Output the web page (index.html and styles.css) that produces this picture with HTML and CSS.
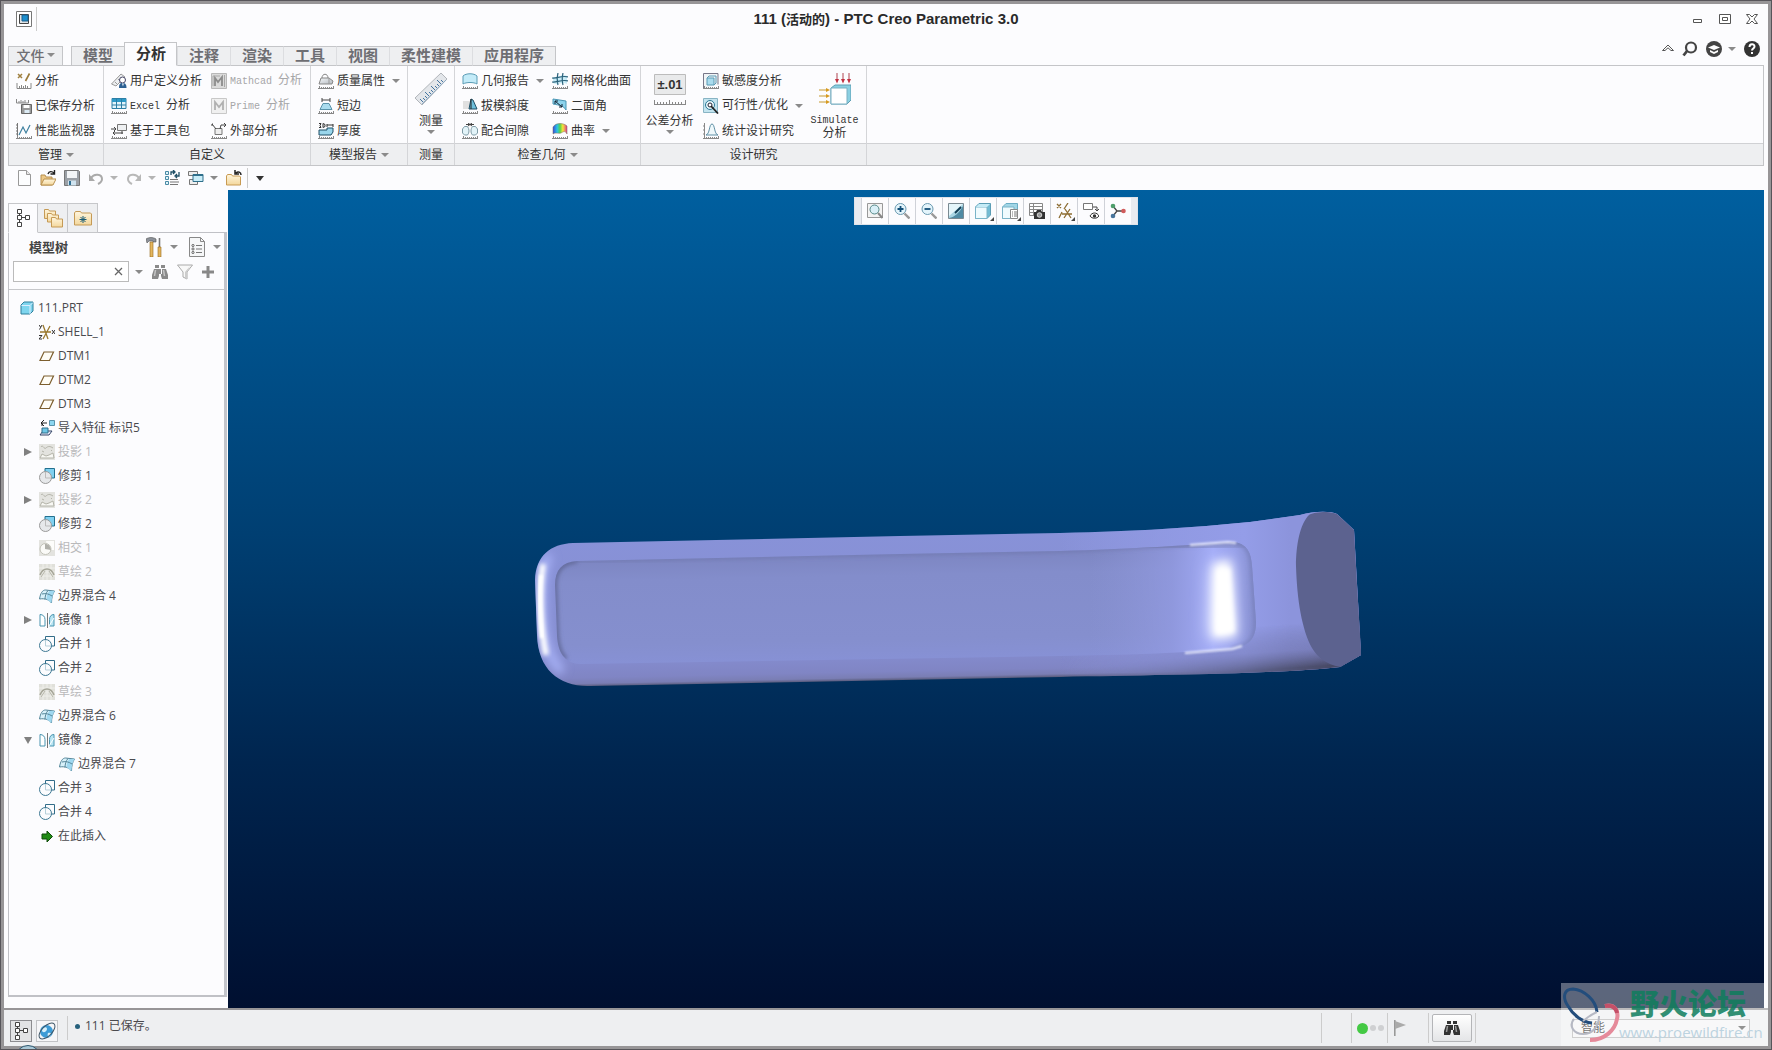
FILE: index.html
```html
<!DOCTYPE html>
<html lang="zh-CN">
<head>
<meta charset="utf-8">
<title>111 (活动的) - PTC Creo Parametric 3.0</title>
<link rel="stylesheet" href="styles.css">
</head>
<body>
<svg class="defs" aria-hidden="true">
  <defs>
    <linearGradient id="g-steel" x1="0" y1="0" x2="1" y2="1"><stop offset="0" stop-color="#f4f6f8"/><stop offset="1" stop-color="#b4bac1"/></linearGradient>
    <linearGradient id="g-fold" x1="0" y1="0" x2="0" y2="1"><stop offset="0" stop-color="#fff6de"/><stop offset="1" stop-color="#f3d79c"/></linearGradient>
    <linearGradient id="g-rain" x1="0" y1="0" x2="1" y2="0"><stop offset="0" stop-color="#3a4bd8"/><stop offset=".3" stop-color="#29c3e6"/><stop offset=".5" stop-color="#58d24a"/><stop offset=".7" stop-color="#f6e43a"/><stop offset="1" stop-color="#e03a8c"/></linearGradient>
    <g id="ticks"><path d="M0 15.500h16" stroke="#888" fill="none"/><path d="M1.500 13v2M3.500 14v1M5.500 14v1M7.500 14v1M9.500 14v1M11.500 14v1M13.500 14v1M15.500 13v2" stroke="#888" fill="none"/></g>
    <g id="folder"><path d="M.5 15V6l1-1.500h4l1 1.500h7l1 1v8z" fill="url(#g-fold)" stroke="#c89a52"/></g>
  </defs>
  <symbol id="i-app" viewBox="0 0 16 16"><path d="M.5.5h15v15H.5z" fill="#fff" stroke="#777"/><path d="M3.500 3.500h9v9h-9z" fill="#dfe3e6" stroke="#444"/><path d="M6 4h6v6H6z" fill="#1d8fce" stroke="#1b5f8c"/></symbol>
  <symbol id="i-analysis" viewBox="0 0 16 16"><path d="M2 1l4 4M6 1L2 5" stroke="#a08040" stroke-width="1.500"/><path d="M13.500.5L9.500 8" stroke="#9a7a3a" stroke-width="1.600"/><path d="M1 10v5.500h14V10" fill="#fff" stroke="#888"/><path d="M3.500 13v2M5.500 12v3M7.500 13v2M9.500 12v3M11.500 13v2" stroke="#888"/></symbol>
  <symbol id="i-saved" viewBox="0 0 16 16"><path d="M.5 1v4h12V2M3 3v2M5 2v3M7 3v2M9 2v3" fill="none" stroke="#888"/><path d="M5.500 6.500h10v9h-10z" fill="#999" stroke="#666"/><path d="M7.500 7h6v3h-6z" fill="#fff"/><path d="M8.500 12h5v3h-5z" fill="#dcebf5"/></symbol>
  <symbol id="i-perf" viewBox="0 0 16 16"><path d="M1.500 0v15M0 2h2M0 5h2M0 8h2M0 11h2" stroke="#777" fill="none"/><path d="M3 12l4-8 3 6 4-8" fill="none" stroke="#3d7f9f" stroke-width="1.200"/><use href="#ticks"/></symbol>
  <symbol id="i-uda" viewBox="0 0 16 16"><path d="M.5 11L10 1l4 3-9 9z" fill="#eceef0" stroke="#999"/><path d="M4 9l2 2M7 6l2 2" stroke="#999"/><circle cx="11.500" cy="7" r="3" fill="#fff" stroke="#446"/><path d="M8 15c0-4 1-5 3.500-5s4 1 4 5z" fill="#2b5f92"/><path d="M11 10.500l1 3 .8-3z" fill="#fff"/></symbol>
  <symbol id="i-excel" viewBox="0 0 16 16"><path d="M1 .5h14v10H1z" fill="#e2f4fb" stroke="#2d7fa6"/><path d="M1 1h14v3H1z" fill="#2d9ac8"/><path d="M5.500 1v10M10.500 1v10M1 7h14" stroke="#2d7fa6"/><use href="#ticks"/></symbol>
  <symbol id="i-toolkit" viewBox="0 0 16 16"><path d="M6.500 1.500h9v6h-9z" fill="#eef0f2" stroke="#777"/><path d="M0 6h5M3 4l2 2-2 2M12 10H2M4 8l-2 2 2 2M11 8v3" fill="none" stroke="#444"/><use href="#ticks"/></symbol>
  <symbol id="i-mathcad" viewBox="0 0 16 16"><path d="M.5.5h15v15H.5z" fill="#dadada" stroke="#b8b8b8"/><path d="M4 13V5l3 4 4-5v9" fill="none" stroke="#8c8c8c" stroke-width="1.800"/><path d="M2 3h7M2 3v10M13.500 2v12" stroke="#a8a8a8"/></symbol>
  <symbol id="i-prime" viewBox="0 0 16 16"><path d="M.5.5h15v15H.5z" fill="#f0f0f0" stroke="#c8c8c8"/><path d="M4 12V4l4 5 4-5v8" fill="none" stroke="#b0b0b0" stroke-width="1.800"/></symbol>
  <symbol id="i-external" viewBox="0 0 16 16"><path d="M4 5.500h7v6H4z" fill="#eee" stroke="#777"/><path d="M1 1l4 5M2 1H1v2M9 6l1-4h5M13 0l2 2-2 2" fill="none" stroke="#444"/><use href="#ticks"/></symbol>
  <symbol id="i-mass" viewBox="0 0 16 16"><path d="M1 11l2-6h8l4 3-1 3z" fill="url(#g-steel)" stroke="#888"/><path d="M4 5c0-5 6-5 6 0" fill="none" stroke="#888"/><path d="M11 5v6" stroke="#999"/><use href="#ticks"/></symbol>
  <symbol id="i-short" viewBox="0 0 16 16"><path d="M4 0v4M12 0v4M4 2h8" stroke="#444" fill="none"/><path d="M5 5.500h6l3 6H2z" fill="#aadcee" stroke="#5a93aa"/><use href="#ticks"/></symbol>
  <symbol id="i-thick" viewBox="0 0 16 16"><path d="M1 .5h2l-1 2 1 2H1M5 .5v4l2-1v-2zM9 2h6M9 1v3M15 1v3" fill="none" stroke="#333"/><path d="M1 12V7h8V5h6v4l-2 3z" fill="#9ad6ec" stroke="#1f4f66"/><use href="#ticks"/></symbol>
  <symbol id="i-ruler" viewBox="0 0 32 32"><path d="M0 25L26 0l6 6L7 32z" fill="#e3e6ea" stroke="#b1b5ba"/><path d="M7 31L31 7" stroke="#8fabc4"/><path d="M8 29l-3-3M10 27l-2-2M12 25l-2-2M14 23l-4-4M16 21l-2-2M18 19l-2-2M20 17l-4-4M22 15l-2-2M24 13l-2-2M26 11l-4-4M28 9l-2-2" stroke="#46759f"/></symbol>
  <symbol id="i-geom" viewBox="0 0 16 16"><path d="M1 11V3c3-3 11-3 14 0v8c-3-2-11-2-14 0z" fill="#c3ebf8" stroke="#5a9bb4"/><use href="#ticks"/></symbol>
  <symbol id="i-draft" viewBox="0 0 16 16"><path d="M1 3h7v8H1z" fill="#e0e0e0"/><path d="M9 1l2 1 4 9H7z" fill="#6fc0dc" stroke="#1f4f66"/><path d="M9 1v10" stroke="#222"/><use href="#ticks"/></symbol>
  <symbol id="i-clear" viewBox="0 0 16 16"><path d="M5.500 3.500h-3L.5 6v4l2 2h3c2-2 2-6 0-8.500zM10.500 3.500h3l2 2.500v4l-2 2h-3c-2-2-2-6 0-8.500z" fill="#e2f3f8" stroke="#7f9ba6"/><path d="M4 1.500h8M6 0l2 1.500L6 3M10 0L8 1.500 10 3" fill="none" stroke="#444"/><use href="#ticks"/></symbol>
  <symbol id="i-mesh" viewBox="0 0 16 16"><path d="M1 10V4c4 2 9-4 14-1v8c-5-3-9 2-14-1z" fill="#c8ebf6"/><path d="M6 0c-1 4-1 8 0 12M11 0c-1 4-1 8 0 12M0 5c4 1 10-3 16-1M0 9c4 1 10-3 16-1" fill="none" stroke="#2a627b" stroke-width="1.200"/><use href="#ticks"/></symbol>
  <symbol id="i-dihedral" viewBox="0 0 16 16"><path d="M1 1l13 2v9c-2-4-7-5-13-6z" fill="#8dd3ec" stroke="#4a96b4"/><path d="M3 3l7 6M3 3v3M3 3h3M10 9V6M10 9H7" stroke="#123" fill="none"/><use href="#ticks"/></symbol>
  <symbol id="i-curv" viewBox="0 0 16 16"><path d="M1 11V4c3-5 11-4 14-1v8c-2-4-4-2-6-1S3 9 1 11z" fill="url(#g-rain)" stroke="#765" stroke-width=".5"/><use href="#ticks"/></symbol>
  <symbol id="i-sens" viewBox="0 0 16 16"><path d="M.5 16V.5H15v11" fill="#f0f4f6" stroke="#778"/><path d="M4 5h7v7H4z" fill="#aadcee" stroke="#5a9bb5"/><path d="M4 5l2-2h7v7l-2 2" fill="none" stroke="#5a9bb5"/><use href="#ticks"/></symbol>
  <symbol id="i-opt" viewBox="0 0 16 16"><path d="M.5.5h14v14H.5z" fill="#c3e4ef" stroke="#88b4c4"/><circle cx="7" cy="7" r="4.500" fill="#e9f7fb" stroke="#2a7896"/><circle cx="7" cy="7" r="2" fill="#fff" stroke="#223"/><path d="M8 8l7 7.500" stroke="#222" stroke-width="1.800"/></symbol>
  <symbol id="i-stat" viewBox="0 0 16 16"><path d="M1.500 0v15M0 3h2M0 7h2M0 11h2" stroke="#888"/><path d="M3 12C7 11 6 1 9 1s2 10 6 11z" fill="#eef8fb" stroke="#5f8fa5"/><use href="#ticks"/></symbol>
  <symbol id="i-sim" viewBox="0 0 32 32"><path d="M12 15l4-3h16v15l-4 4H12z" fill="#8ad0e2" stroke="#5c9db2"/><path d="M12 15h16v16H12z" fill="#fff" stroke="#7ab0c2"/><path d="M18 0v8M24 0v8M30 0v8" stroke="#b04450"/><path d="M16 6h4l-2 4.500zM22 6h4l-2 4.500zM28 6h4l-2 4.500z" fill="#c03040"/><path d="M0 17h9M0 23h9M0 29h9" stroke="#c79a30"/><path d="M7 15l4 2-4 2zM7 21l4 2-4 2zM7 27l4 2-4 2z" fill="#d79a20"/></symbol>
  <symbol id="i-new" viewBox="0 0 16 16"><path d="M2.500.5h8l4 4v11h-12z" fill="#fcfdfe" stroke="#999"/><path d="M10.500.5v4h4" fill="#e8e8e8" stroke="#999"/></symbol>
  <symbol id="i-open" viewBox="0 0 16 16"><path d="M1 15V5h4l1 2h6v8z" fill="#edc988" stroke="#b8904f"/><path d="M1 15l3-6h12l-3 6z" fill="url(#g-fold)" stroke="#b8904f"/><path d="M8 4c1-3 4-3 6-1M14.500 0v4h-4" fill="none" stroke="#222" stroke-width="1.400"/></symbol>
  <symbol id="i-save" viewBox="0 0 16 16"><path d="M.5.5h14l1 1v14H.5z" fill="#9ba0a6" stroke="#777"/><path d="M3 1h10v7H3z" fill="#f3f5f7"/><path d="M4 10.500h8v5H4z" fill="#cfe3ef"/><path d="M5 11h2v4H5z" fill="#2f6f93"/></symbol>
  <symbol id="i-undo" viewBox="0 0 16 16"><path d="M3 8c3-5 11-4 11 1 0 3-2 4-4 5" fill="none" stroke="#aaa" stroke-width="2"/><path d="M1 4v7h6z" fill="#aaa"/></symbol>
  <symbol id="i-redo" viewBox="0 0 16 16"><path d="M13 8C10 3 2 4 2 9c0 3 2 4 4 5" fill="none" stroke="#b8b8b8" stroke-width="2"/><path d="M15 4v7H9z" fill="#b8b8b8"/></symbol>
  <symbol id="i-regen" viewBox="0 0 16 16"><path d="M1.500 1.500h3v3h-3zM1.500 6.500h3v3h-3zM1.500 11.500h3v3h-3z" fill="#dff3fa" stroke="#4a8ba5"/><path d="M7 5V2h3M9 0l2 2-2 2M15 2v4h-3M13 4l-2 2 2 2" stroke="#1f4f66" stroke-width="1.300" fill="none"/><path d="M6 9.500h8M6 12h9M6 14.500h8" stroke="#777"/></symbol>
  <symbol id="i-windows" viewBox="0 0 16 16"><path d="M.5 1.500h9v4h-9zM1.500 9.500h8v5h-8z" fill="#eee" stroke="#777"/><path d="M5 4.500h10v7H5z" fill="#c9edf8" stroke="#2f6f8b"/><path d="M5 5h10" stroke="#2f6f8b" stroke-width="2"/></symbol>
  <symbol id="i-close-folder" viewBox="0 0 16 16"><use href="#folder"/><path d="M15 5c0-3-3-4-5-2M9 0v4h4" fill="none" stroke="#222" stroke-width="1.500"/></symbol>
  <symbol id="i-tree" viewBox="0 0 16 18"><path d="M2.500.5h4v4h-4zM2.500 6.500h4v4h-4zM2.500 13.500h4v4h-4zM10.500 6.500h4v4h-4z" fill="#fff" stroke="#444"/><path d="M4.500 4.500v2M4.500 10.500v3M6.500 8.500h4" stroke="#444"/></symbol>
  <symbol id="i-folders" viewBox="0 0 20 20"><path d="M1.500 10.500v-9h4L6.500 3h6v7.500z" fill="url(#g-fold)" stroke="#c59a55"/><path d="M4.500 14V5.500h4l1 1.500h6v7z" fill="url(#g-fold)" stroke="#c59a55"/><path d="M8.500 19V9.500h4l1 1.500h6v8z" fill="url(#g-fold)" stroke="#c59a55"/></symbol>
  <symbol id="i-favs" viewBox="0 0 18 16"><path d="M.5 15V3l1-1.500h5L7.500 3h9l1 1v11z" fill="url(#g-fold)" stroke="#c59a55"/><path d="M9 6v7M5.500 9.500h7M6.500 7l5 5M11.500 7l-5 5" stroke="#1b5c74"/></symbol>
  <symbol id="i-tools" viewBox="0 0 16 20"><path d="M0 2c3-2 7-2 10 0v3H7V4H3l-2 2z" fill="#8c9199" stroke="#555" stroke-width=".6"/><path d="M4 5h3v15H4z" fill="#e4b65e" stroke="#96681c" stroke-width=".6"/><path d="M13.500 1v10" stroke="#777" stroke-width="1.600"/><path d="M12 10h3v10h-3z" fill="#e4b65e" stroke="#96681c" stroke-width=".6"/></symbol>
  <symbol id="i-sheet" viewBox="0 0 16 20"><path d="M.5.5h11l4 4v15H.5z" fill="#f6f7f8" stroke="#888"/><path d="M11.500.5v4h4" fill="none" stroke="#888"/><path d="M7 8.500h6M7 12h6M7 15.500h6" stroke="#777"/><circle cx="4" cy="8.500" r="1.100" fill="none" stroke="#666"/><circle cx="4" cy="12" r="1.100" fill="none" stroke="#666"/><circle cx="4" cy="15.500" r="1.100" fill="none" stroke="#666"/></symbol>
  <symbol id="i-bino" viewBox="0 0 16 16"><path d="M3 1h4v3H3zM9 1h4v3H9zM6 5h4v5H6zM2 5h5v7l-1 3H0v-4zM14 5H9v7l1 3h6v-4z" fill="currentColor"/><path d="M3.500 6l-1 6M11.500 6l1 6" stroke="#fff" stroke-opacity=".5" stroke-width="1.500"/></symbol>
  <symbol id="i-funnel" viewBox="0 0 16 16"><path d="M.5 1h15L10 8v7l-4-2V8z" fill="#f8f8f8" stroke="#aaa"/><path d="M10 8v7l-2-1V8l5-6" fill="#ccc"/></symbol>
  <symbol id="i-part" viewBox="0 0 16 16"><path d="M2 5l3-3h9v9l-3 3H2z" fill="#7ed5ee" stroke="#2f7f9b"/><path d="M2.500 5.500H11V14M11 5.500l3-3" fill="none" stroke="#def"/></symbol>
  <symbol id="i-csys" viewBox="0 0 16 16"><path d="M1 8h11M4 1l5 14M11 2L4 15" stroke="#9b7a30" stroke-width="1.300"/><path d="M0 1l1.500 2M3 1L.5 5.500M0 11.500h3L0 15h3M13 6l3 4M16 6l-3 4" fill="none" stroke="#333"/></symbol>
  <symbol id="i-plane" viewBox="0 0 16 16"><path d="M5 4h9.500l-4 8.500H1z" fill="#fffdf6" stroke="#7c5e2e" stroke-width="1.200"/></symbol>
  <symbol id="i-import" viewBox="0 0 16 16"><path d="M10.500.5h5v5h-5z" fill="#8cd6f0" stroke="#5a93aa"/><path d="M3 6V3h5M5 0L2 3l3 3" stroke="#222" fill="none"/><path d="M4 11l-3 4h9l3-4z" fill="#eef" stroke="#346"/><path d="M3 8h6v5H3z" fill="#6fc7e6" stroke="#2f6f8b"/></symbol>
  <symbol id="i-project" viewBox="0 0 16 16"><path d="M0 0h16v16H0z" fill="#e3e3df"/><path d="M2 3c2-3 3 3 5 1s4-2 7 0M3 7l2 1M12 6l1 1" fill="none" stroke="#b4b4aa"/><path d="M1 14l2-4 4 2 3-1 4-2 1 5z" fill="#f8f8f4" stroke="#b4b4aa"/></symbol>
  <symbol id="i-trim" viewBox="0 0 16 16"><path d="M6 .5h9.500V10H6z" fill="#7fd0f0" stroke="#23708f"/><circle cx="6.500" cy="9.500" r="6" fill="#e6e8ea" stroke="#999"/><path d="M6.500 4v6H12" fill="none" stroke="#bbb"/></symbol>
  <symbol id="i-intersect" viewBox="0 0 16 16"><path d="M0 0h16v16H0z" fill="#e3e3df"/><path d="M7 1h8v9H9z" fill="#fdfdfb"/><circle cx="6.500" cy="9" r="5.500" fill="#fafaf7" stroke="#c2c2b8"/><path d="M6 4c4 0 5 2 6 6L6 9z" fill="#b0b0aa"/></symbol>
  <symbol id="i-sketch" viewBox="0 0 16 16"><path d="M0 0h16v16H0z" fill="#e0e0da"/><path d="M0 4h16M0 8h16M0 12h16M4 0v16M8 0v16M12 0v16" stroke="#efefea"/><path d="M1 11C4 3 12 3 15 11" fill="none" stroke="#a5a598" stroke-width="1.300"/><path d="M2 13l4-6M14 13l-4-6" stroke="#b5b5a8"/></symbol>
  <symbol id="i-blend" viewBox="0 0 16 16"><path d="M.5 11c1-6 3-9 6-9l9 1c-2 3-3 7-3 12-2-3-6-5-12-4z" fill="#d8f1fa" stroke="#55869a"/><path d="M15.500 3c-2 3-3 7-3 12l-5-4c0-3 1-6 3-8z" fill="#9fd8f0"/><path d="M9 2.500c-2 2-3 6-3 9M3 6c4-1 7 0 10 2" fill="none" stroke="#55869a"/></symbol>
  <symbol id="i-mirror" viewBox="0 0 16 16"><path d="M1 2.500c3 0 5 2 5 5V14H1z" fill="#fff" stroke="#4a95b0"/><path d="M8.500 1v15" stroke="#777"/><path d="M15 2.500c-3 0-4.500 2-4.500 5V14H15z" fill="#b9e5f3" stroke="#4a95b0"/><path d="M10 14l5-8" stroke="#fff"/></symbol>
  <symbol id="i-merge" viewBox="0 0 16 16"><path d="M6.500 4V.5h9V10H12" fill="none" stroke="#326d89"/><circle cx="6.500" cy="9.500" r="6" fill="none" stroke="#3e7893"/><path d="M6.500 4v6H12" fill="none" stroke="#b7d0da"/></symbol>
  <symbol id="i-insert" viewBox="0 0 16 16"><path d="M3 6h5V3l5.500 5.500L8 14v-3H3z" fill="#1f8a14" stroke="#0f4a0a"/></symbol>
  <symbol id="i-zoomfit" viewBox="0 0 16 16"><path d="M.5.5h15v14H.5z" fill="#f3f3f3" stroke="#999"/><circle cx="7.500" cy="6.500" r="4.500" fill="#d9eff7" stroke="#588"/><path d="M11 10l4.500 5" stroke="#888" stroke-width="2"/></symbol>
  <symbol id="i-zoomin" viewBox="0 0 16 16"><circle cx="6.500" cy="6" r="5.500" fill="#e3f4fb" stroke="#6a9ab0"/><path d="M3.500 6h6M6.500 3v6" stroke="#124f78" stroke-width="1.800"/><path d="M10.500 10.500l5 5" stroke="#999" stroke-width="2.400"/></symbol>
  <symbol id="i-zoomout" viewBox="0 0 16 16"><circle cx="6.500" cy="6" r="5.500" fill="#e3f4fb" stroke="#6a9ab0"/><path d="M3.500 6h6" stroke="#124f78" stroke-width="1.800"/><path d="M10.500 10.500l5 5" stroke="#999" stroke-width="2.400"/></symbol>
  <symbol id="i-repaint" viewBox="0 0 16 16"><path d="M.5.5h15v15H.5z" fill="#a9d6e4" stroke="#7a8a92"/><path d="M1 1h14L1 13z" fill="#e4f5fa"/><path d="M15 15H1c6-1 10-5 14-12z" fill="#4f8ba4"/><path d="M7 10l6-6" stroke="#103b52" stroke-width="1.800"/></symbol>
  <symbol id="i-cube" viewBox="0 0 16 16"><path d="M.5 4L4 .5h11.500V12L12 15.500H.5z" fill="#72bcd4" stroke="#5b9db5"/><path d="M.5 4H12v11.500H.5z" fill="#f0fbfe" stroke="#7ab4c8"/><path d="M1 4l3-3h11l-3 3z" fill="#c5ebf6"/></symbol>
  <symbol id="i-saved-view" viewBox="0 0 16 16"><path d="M.5 4L4 .5h11.500V12L12 15.500H.5z" fill="#a2d6e6" stroke="#6badc5"/><path d="M.5 4H12v11.500H.5z" fill="#f0fbfe" stroke="#7ab4c8"/><path d="M8.500 6.500h7v9h-7z" fill="#fff" stroke="#888"/><path d="M10 9h1M12 9h3M10 11h1M12 11h3M10 13h1M12 13h3" stroke="#777"/></symbol>
  <symbol id="i-viewmgr" viewBox="0 0 16 16"><path d="M.5.5h13v12H.5zM.5 3.500h13M.5 6.500h13M.5 9.500h13M4.500.5v12" fill="#fff" stroke="#888"/><path d="M5 9h2l1-2h4l1 2h3v7H5z" fill="#333"/><circle cx="10.500" cy="12" r="2.300" fill="#999" stroke="#fff" stroke-width=".7"/></symbol>
  <symbol id="i-datum" viewBox="0 0 16 16"><path d="M1 1l4 4M5 1L1 5M12 0L8 6M6 9l-3 6M6 11h10M9 6l6 9M14 6L8 15" fill="none" stroke="#8d6d33" stroke-width="1.300"/></symbol>
  <symbol id="i-annot" viewBox="0 0 16 16"><path d="M.5.5h9v6h-9z" fill="#fff" stroke="#777"/><path d="M10 4h4v4M12 6l2 2 2-2" fill="none" stroke="#444"/><path d="M7 13c2-4 7-4 9 0-2 3-7 3-9 0z" fill="#fff" stroke="#333"/><circle cx="11.500" cy="13" r="1.700" fill="#333"/></symbol>
  <symbol id="i-spin" viewBox="0 0 16 16"><path d="M3 3l4 5-4 5M7 8h7" fill="none" stroke="#444" stroke-width="1.300"/><circle cx="3" cy="3" r="2.300" fill="#4f9f6c"/><circle cx="13.500" cy="8" r="2.300" fill="#d05c5c"/><circle cx="3" cy="13" r="2.300" fill="#48759c"/></symbol>
  <symbol id="i-globe" viewBox="0 0 18 18"><circle cx="8.500" cy="9.500" r="6.500" fill="#3d9bd6"/><path d="M4 8c1-3 5-4 5-1s-5 5-5 1M10 11c3-1 4 1 2 3s-3-1-2-3" fill="#d6f0fb"/><ellipse cx="9" cy="9" rx="10" ry="5" transform="rotate(-45 9 9)" fill="none" stroke="#40586a"/></symbol>
  <symbol id="i-min" viewBox="0 0 12 12"><path d="M1.500 6.500h8v3h-8z" fill="#fff" stroke="#555"/></symbol>
  <symbol id="i-max" viewBox="0 0 12 12"><path d="M.5 1.500h11v9H.5z" fill="#fff" stroke="#555"/><path d="M3.500 4.500h5v3h-5z" fill="#fff" stroke="#555"/></symbol>
  <symbol id="i-x" viewBox="0 0 12 12"><path d="M.5 1.500h3L6 4l2.500-2.500h3L8 6l3.500 4.500h-3L6 8l-2.500 2.500h-3L4 6z" fill="#fff" stroke="#555"/></symbol>
  <symbol id="i-up" viewBox="0 0 12 12"><path d="M.5 7.500L6 2l5.500 5.500H9L6 4.800 3 7.500z" fill="#fff" stroke="#555"/></symbol>
  <symbol id="i-search" viewBox="0 0 16 16"><circle cx="9" cy="6.500" r="5" fill="none" stroke="#444" stroke-width="2.200"/><path d="M5 10l-3.500 4.500" stroke="#444" stroke-width="2.800"/></symbol>
  <symbol id="i-learn" viewBox="0 0 16 16"><circle cx="8" cy="8" r="8" fill="#444"/><path d="M2 6.500L8 4l6 2.500L8 9z" fill="#fff"/><path d="M4 9l4 2 4-2v2l-4 2-4-2z" fill="#fff"/></symbol>
  <symbol id="i-help" viewBox="0 0 16 16"><circle cx="8" cy="8" r="8" fill="#333"/><path d="M5.500 6c0-3.500 5-3.500 5-.500 0 2-2.500 2-2.500 4" fill="none" stroke="#fff" stroke-width="2"/><path d="M7 11h2v2H7z" fill="#fff"/></symbol>
  <symbol id="i-flag" viewBox="0 0 12 16"><path d="M.8 0v16" stroke="#999" stroke-width="1.600"/><path d="M1 1l11 4-11 4z" fill="#aaa"/></symbol>
</svg>

<div class="frame">
<div class="window">
  <header class="titlebar">
    <div class="title-left"><svg class="i16"><use href="#i-app"/></svg><span class="vline"></span></div>
    <h1>111 (<span>活动的</span>) - PTC Creo Parametric 3.0</h1>
    <div class="win-controls">
      <button aria-label="最小化"><svg class="i12"><use href="#i-min"/></svg></button>
      <button aria-label="最大化"><svg class="i12"><use href="#i-max"/></svg></button>
      <button aria-label="关闭"><svg class="i12"><use href="#i-x"/></svg></button>
    </div>
  </header>

  <nav class="tabs">
    <button class="tab file">文件<i class="caret"></i></button>
    <div class="tabset">
      <button class="tab">模型</button><button class="tab active">分析</button><button class="tab">注释</button><button class="tab">渲染</button><button class="tab">工具</button><button class="tab">视图</button><button class="tab">柔性建模</button><button class="tab">应用程序</button>
    </div>
    <div class="help-tools">
      <button aria-label="折叠功能区"><svg class="i12"><use href="#i-up"/></svg></button>
      <button aria-label="搜索"><svg class="i16"><use href="#i-search"/></svg></button>
      <button class="learn" aria-label="学习"><svg class="i16"><use href="#i-learn"/></svg><i class="caret"></i></button>
      <button aria-label="帮助"><svg class="i16"><use href="#i-help"/></svg></button>
    </div>
  </nav>

  <section class="ribbon">
    <div class="group g-manage">
      <div class="group-body"><div class="col">
        <button class="cmd"><svg class="i16"><use href="#i-analysis"/></svg>分析</button>
        <button class="cmd"><svg class="i16"><use href="#i-saved"/></svg>已保存分析</button>
        <button class="cmd"><svg class="i16"><use href="#i-perf"/></svg>性能监视器</button>
      </div></div>
      <button class="group-label">管理<i class="caret"></i></button>
    </div>
    <div class="group g-custom">
      <div class="group-body"><div class="col col-a">
        <button class="cmd"><svg class="i16"><use href="#i-uda"/></svg>用户定义分析</button>
        <button class="cmd"><svg class="i16"><use href="#i-excel"/></svg><span><span class="mono">Excel&nbsp;</span>分析</span></button>
        <button class="cmd"><svg class="i16"><use href="#i-toolkit"/></svg>基于工具包</button>
      </div><div class="col">
        <button class="cmd" disabled><svg class="i16"><use href="#i-mathcad"/></svg><span><span class="mono">Mathcad&nbsp;</span>分析</span></button>
        <button class="cmd" disabled><svg class="i16"><use href="#i-prime"/></svg><span><span class="mono">Prime&nbsp;</span>分析</span></button>
        <button class="cmd"><svg class="i16"><use href="#i-external"/></svg>外部分析</button>
      </div></div>
      <div class="group-label">自定义</div>
    </div>
    <div class="group g-report">
      <div class="group-body"><div class="col">
        <button class="cmd"><svg class="i16"><use href="#i-mass"/></svg>质量属性<i class="caret"></i></button>
        <button class="cmd"><svg class="i16"><use href="#i-short"/></svg>短边</button>
        <button class="cmd"><svg class="i16"><use href="#i-thick"/></svg>厚度</button>
      </div></div>
      <button class="group-label">模型报告<i class="caret"></i></button>
    </div>
    <div class="group g-measure">
      <div class="group-body">
        <button class="big"><svg class="i32"><use href="#i-ruler"/></svg><span>测量</span><i class="caret"></i></button>
      </div>
      <div class="group-label">测量</div>
    </div>
    <div class="group g-inspect">
      <div class="group-body"><div class="col col-b">
        <button class="cmd"><svg class="i16"><use href="#i-geom"/></svg>几何报告<i class="caret"></i></button>
        <button class="cmd"><svg class="i16"><use href="#i-draft"/></svg>拔模斜度</button>
        <button class="cmd"><svg class="i16"><use href="#i-clear"/></svg>配合间隙</button>
      </div><div class="col">
        <button class="cmd"><svg class="i16"><use href="#i-mesh"/></svg>网格化曲面</button>
        <button class="cmd"><svg class="i16"><use href="#i-dihedral"/></svg>二面角</button>
        <button class="cmd"><svg class="i16"><use href="#i-curv"/></svg>曲率<i class="caret"></i></button>
      </div></div>
      <button class="group-label">检查几何<i class="caret"></i></button>
    </div>
    <div class="group g-study">
      <div class="group-body">
        <button class="big"><svg class="i32" viewBox="0 0 32 32"><path d="M.5 1.500h31v20H.5z" fill="#e9eaeb" stroke="#bcbcbc"/><path d="M0 31.500h32M.5 27v4M3.500 29v2M6.500 29v2M9.500 29v2M12.500 29v2M15.500 27v4M18.500 29v2M21.500 29v2M24.500 29v2M27.500 29v2M31.500 27v4" stroke="#888" fill="none"/><text x="16" y="16" text-anchor="middle" class="tol-text">±.01</text></svg><span>公差分析</span><i class="caret"></i></button>
        <div class="col">
          <button class="cmd"><svg class="i16"><use href="#i-sens"/></svg>敏感度分析</button>
          <button class="cmd"><svg class="i16"><use href="#i-opt"/></svg><span>可行性<span class="mono">/</span>优化</span><i class="caret"></i></button>
          <button class="cmd"><svg class="i16"><use href="#i-stat"/></svg>统计设计研究</button>
        </div>
        <button class="big"><svg class="i32"><use href="#i-sim"/></svg><span class="mono">Simulate</span><span class="second">分析</span></button>
      </div>
      <div class="group-label">设计研究</div>
    </div>
    <div class="group-rest"><div class="group-label"></div></div>
  </section>

  <div class="quick">
    <button aria-label="新建"><svg class="i16"><use href="#i-new"/></svg></button>
    <button aria-label="打开"><svg class="i16"><use href="#i-open"/></svg></button>
    <button aria-label="保存"><svg class="i16"><use href="#i-save"/></svg></button>
    <button class="faint" aria-label="撤消"><svg class="i16"><use href="#i-undo"/></svg><i class="caret"></i></button>
    <button class="faint" aria-label="重做"><svg class="i16"><use href="#i-redo"/></svg><i class="caret"></i></button>
    <button aria-label="重新生成"><svg class="i16"><use href="#i-regen"/></svg></button>
    <button aria-label="窗口"><svg class="i16"><use href="#i-windows"/></svg><i class="caret"></i></button>
    <button class="last" aria-label="关闭窗口"><svg class="i16"><use href="#i-close-folder"/></svg></button>
    <button aria-label="自定义快速访问工具栏"><i class="caret dark"></i></button>
  </div>

  <main class="main">
    <aside class="side">
      <div class="side-tabs">
        <button class="side-tab on" aria-label="模型树"><svg width="16" height="18"><use href="#i-tree"/></svg></button>
        <button class="side-tab" aria-label="文件夹浏览器"><svg width="20" height="20"><use href="#i-folders"/></svg></button>
        <button class="side-tab" aria-label="收藏夹"><svg width="18" height="16"><use href="#i-favs"/></svg></button>
      </div>
      <div class="panel">
        <div class="panel-head">
          <h2>模型树</h2>
          <button aria-label="设置"><svg width="16" height="20"><use href="#i-tools"/></svg><i class="caret"></i></button>
          <button aria-label="显示"><svg width="16" height="20"><use href="#i-sheet"/></svg><i class="caret"></i></button>
        </div>
        <div class="panel-search">
          <div class="search-box"><input type="text" aria-label="搜索模型树"><button aria-label="清除"><svg width="9" height="9" viewBox="0 0 9 9"><path d="M1 1l7 7M8 1L1 8" stroke="#666" stroke-width="1.300"/></svg></button></div>
          <button aria-label="选项"><i class="caret"></i></button>
          <button class="grey" aria-label="查找"><svg class="i16"><use href="#i-bino"/></svg></button>
          <button aria-label="过滤"><svg class="i16"><use href="#i-funnel"/></svg></button>
          <button aria-label="添加"><svg width="12" height="12" viewBox="0 0 12 12"><path d="M6 0v12M0 6h12" stroke="#888" stroke-width="3"/></svg></button>
        </div>
        <ul class="tree">
          <li class="root"><svg class="i16"><use href="#i-part"/></svg>111.PRT</li>
          <li><svg class="i16"><use href="#i-csys"/></svg>SHELL_1</li>
          <li><svg class="i16"><use href="#i-plane"/></svg>DTM1</li>
          <li><svg class="i16"><use href="#i-plane"/></svg>DTM2</li>
          <li><svg class="i16"><use href="#i-plane"/></svg>DTM3</li>
          <li><svg class="i16"><use href="#i-import"/></svg>导入特征 标识5</li>
          <li class="off shut"><svg class="i16"><use href="#i-project"/></svg>投影 1</li>
          <li><svg class="i16"><use href="#i-trim"/></svg>修剪 1</li>
          <li class="off shut"><svg class="i16"><use href="#i-project"/></svg>投影 2</li>
          <li><svg class="i16"><use href="#i-trim"/></svg>修剪 2</li>
          <li class="off"><svg class="i16"><use href="#i-intersect"/></svg>相交 1</li>
          <li class="off"><svg class="i16"><use href="#i-sketch"/></svg>草绘 2</li>
          <li><svg class="i16"><use href="#i-blend"/></svg>边界混合 4</li>
          <li class="shut"><svg class="i16"><use href="#i-mirror"/></svg>镜像 1</li>
          <li><svg class="i16"><use href="#i-merge"/></svg>合并 1</li>
          <li><svg class="i16"><use href="#i-merge"/></svg>合并 2</li>
          <li class="off"><svg class="i16"><use href="#i-sketch"/></svg>草绘 3</li>
          <li><svg class="i16"><use href="#i-blend"/></svg>边界混合 6</li>
          <li class="open"><svg class="i16"><use href="#i-mirror"/></svg>镜像 2</li>
          <li class="child"><svg class="i16"><use href="#i-blend"/></svg>边界混合 7</li>
          <li><svg class="i16"><use href="#i-merge"/></svg>合并 3</li>
          <li><svg class="i16"><use href="#i-merge"/></svg>合并 4</li>
          <li><svg class="i16"><use href="#i-insert"/></svg>在此插入</li>
        </ul>
      </div>
    </aside>

    <section class="viewport">
      <svg class="model" viewBox="228 190 1536 818" role="img" aria-label="零件模型">
        <defs>
          <linearGradient id="m-body" gradientUnits="userSpaceOnUse" x1="900" y1="532" x2="903" y2="680"><stop offset="0" stop-color="#8892d8"/><stop offset=".8" stop-color="#858dd0"/><stop offset=".94" stop-color="#8085c4"/><stop offset=".98" stop-color="#7a7eb4"/><stop offset="1" stop-color="#5a5c7c"/></linearGradient>
          <linearGradient id="m-end" gradientUnits="userSpaceOnUse" x1="1060" y1="0" x2="1290" y2="0"><stop offset="0" stop-color="#98a0ec" stop-opacity="0"/><stop offset=".8" stop-color="#949de8"/><stop offset="1" stop-color="#8c94dc"/></linearGradient>
          <linearGradient id="m-shade" gradientUnits="userSpaceOnUse" x1="1200" y1="630" x2="1203" y2="674"><stop offset="0" stop-color="#55587c" stop-opacity="0"/><stop offset=".6" stop-color="#66699a" stop-opacity=".5"/><stop offset="1" stop-color="#484a66"/></linearGradient>
          <linearGradient id="m-shade-mask" gradientUnits="userSpaceOnUse" x1="1060" y1="0" x2="1330" y2="0"><stop offset="0" stop-color="#000"/><stop offset="1" stop-color="#fff"/></linearGradient>
          <mask id="m-fade"><path d="M1000 480h400v220h-400z" fill="url(#m-shade-mask)"/></mask>
          <linearGradient id="m-pocket" gradientUnits="userSpaceOnUse" x1="900" y1="554" x2="902" y2="660"><stop offset="0" stop-color="#7d86c2"/><stop offset=".2" stop-color="#838dcb"/><stop offset=".8" stop-color="#858fce"/><stop offset="1" stop-color="#8791d5"/></linearGradient>
          <linearGradient id="m-glow" gradientUnits="userSpaceOnUse" x1="1090" y1="0" x2="1254" y2="0"><stop offset="0" stop-color="#8e96d8" stop-opacity="0"/><stop offset=".5" stop-color="#949ce4" stop-opacity=".7"/><stop offset=".75" stop-color="#a4adf8"/><stop offset=".88" stop-color="#98a1ea"/><stop offset="1" stop-color="#858ecf"/></linearGradient>
          <filter id="b1" x="-50%" y="-200%" width="200%" height="500%"><feGaussianBlur stdDeviation="1"/></filter>
          <filter id="b2" x="-100%" y="-10%" width="300%" height="120%"><feGaussianBlur stdDeviation="2"/></filter>
          <filter id="b5" x="-200%" y="-20%" width="500%" height="140%"><feGaussianBlur stdDeviation="5"/></filter>
          <filter id="b9" x="-200%" y="-40%" width="500%" height="180%"><feGaussianBlur stdDeviation="9"/></filter>
          <path id="outline" d="M573 543L900 536 1060 533C1140 531 1190 528 1250 522L1300 515C1315 511 1330 511 1337 514L1354 530 1361 655 1340 667C1280 674 1160 675 1060 677L590 686C560 687 538 670 537 635L535 580C536 556 550 544 573 543z"/>
          <path id="pocket" d="M577 561L900 554 1060 551C1130 549 1180 546 1230 542 1245 542 1251 550 1252 566L1256 622C1256 638 1250 646 1232 649 1180 653 1120 655 1060 656L580 664C564 663 558 652 557 636L555 585C555 570 562 562 577 561z"/>
          <clipPath id="c-body"><use href="#outline"/></clipPath>
          <clipPath id="c-pocket"><use href="#pocket"/></clipPath>
        </defs>
        <use href="#outline" fill="url(#m-body)"/>
        <g clip-path="url(#c-body)">
          <path d="M1060 500h310v190h-310z" fill="url(#m-end)"/>
          <path d="M1000 620h360v70h-360z" fill="url(#m-shade)" mask="url(#m-fade)"/>
          <path d="M549 555C540 570 541 600 543 625 545 645 550 660 562 672" fill="none" stroke="#a9b3f8" stroke-width="9" filter="url(#b5)"/>
          <path d="M543 564C539 590 540 625 546 655" fill="none" stroke="#fff" stroke-width="6" filter="url(#b2)"/>
          <path d="M541 575C539 590 540 620 542 638" fill="none" stroke="#fff" stroke-width="4" filter="url(#b1)"/>
        </g>
        <use href="#pocket" fill="url(#m-pocket)"/>
        <g clip-path="url(#c-pocket)">
          <path d="M1090 530h180v140h-180z" fill="url(#m-glow)"/>
          <path d="M1100 546L1250 538" stroke="#7a82b8" stroke-width="14" filter="url(#b5)"/>
          <path d="M1212 566l18-4 5 74-26 2z" fill="#dfe4ff" filter="url(#b9)"/>
          <path d="M1213 564l17-4 6 76-24 2z" fill="#fff" filter="url(#b5)"/>
          <path d="M1217 570l13-2 4 64-18 2z" fill="#fff" filter="url(#b2)"/>
          <path d="M577 561L900 554 1060 551 1200 544" fill="none" stroke="#6b72a6" stroke-width="2" filter="url(#b2)"/>
          <path d="M577 561C562 562 555 570 555 585L557 636C558 648 561 655 566 659" fill="none" stroke="#5f6694" stroke-width="4" filter="url(#b2)"/>
          <path d="M1234 542C1245 544 1251 550 1252 566L1256 622C1256 638 1250 646 1232 649" fill="none" stroke="#767eb8" stroke-width="3" filter="url(#b2)"/>
        </g>
        <path d="M1190 545L1228 542 1236 543M1185 653L1232 649 1242 646" fill="none" stroke="#eef0ff" stroke-width="2" filter="url(#b1)"/>
        <path d="M1326 512C1318 512 1312 513 1309 515 1300 524 1296 545 1296 566 1297 600 1302 630 1312 648 1318 658 1326 664 1340 667L1361 655V650L1357 585 1354 530 1337 514C1334 513 1330 512 1326 512z" fill="#5c628f"/>
      </svg>
      <div class="view-tools">
        <button aria-label="重新调整"><svg class="i16"><use href="#i-zoomfit"/></svg></button>
        <button aria-label="放大"><svg class="i16"><use href="#i-zoomin"/></svg></button>
        <button aria-label="缩小"><svg class="i16"><use href="#i-zoomout"/></svg></button>
        <button aria-label="重画"><svg class="i16"><use href="#i-repaint"/></svg></button>
        <button class="more" aria-label="显示样式"><svg class="i16"><use href="#i-cube"/></svg></button>
        <button class="more" aria-label="已保存方向"><svg class="i16"><use href="#i-saved-view"/></svg></button>
        <button aria-label="视图管理器"><svg class="i16"><use href="#i-viewmgr"/></svg></button>
        <button class="more" aria-label="基准显示"><svg class="i16"><use href="#i-datum"/></svg></button>
        <button aria-label="注释显示"><svg class="i16"><use href="#i-annot"/></svg></button>
        <button aria-label="旋转中心"><svg class="i16"><use href="#i-spin"/></svg></button>
      </div>
    </section>
  </main>

  <footer class="status">
    <button class="nav-btn pressed" aria-label="导航器"><svg width="16" height="18"><use href="#i-tree"/></svg></button>
    <button class="nav-btn" aria-label="浏览器"><svg width="18" height="18"><use href="#i-globe"/></svg></button>
    <p class="message"><i class="dot"></i>111 已保存。</p>
    <div class="cell blank"></div>
    <div class="cell lights"><i class="go"></i><i></i><i></i></div>
    <div class="cell flag"><svg width="12" height="16"><use href="#i-flag"/></svg></div>
    <div class="cell find"><button aria-label="查找"><svg class="i16"><use href="#i-bino"/></svg></button></div>
    <div class="cell pick"><select aria-label="选择过滤器"><option>智能</option></select><i class="caret"></i></div>
  </footer>
  <div class="watermark">
    <svg class="mark" viewBox="0 0 60 58"><g fill="none" stroke-width="3"><path d="M35 26C34 14 22 4 11 3 2 3 0 11 6 20c5 9 14 16 24 17" stroke="#234d7c"/><path d="M12 33c-6 7 0 15 9 15 10 0 16-8 16-18M35 26c-7 3-10 6-14 9" stroke="#b6b9c4" stroke-width="2"/><path d="M43 20c9-2 14 4 12 13-2 11-12 21-27 21" stroke="#e58a9a" stroke-width="4"/><path d="M43 20c7-1 11 1 12 7" stroke="#c45068" stroke-width="4"/></g></svg>
    <div class="mark-text"><strong>野火论坛</strong><span>www.proewildfire.cn</span></div>
  </div>
</div>
<i class="orb"></i>
</div>
</body>
</html>
```
FILE: styles.css
```css
* { box-sizing: border-box; }

body {
  margin: 0;
  color: #333;
  font: 12px/16px "Liberation Sans", "Noto Sans CJK SC", sans-serif;
}

button {
  margin: 0;
  padding: 0;
  border: 0;
  background: none;
  color: inherit;
  font: inherit;
}

svg { display: block; flex: none; }
.defs { position: absolute; width: 0; height: 0; }
.i12 { width: 12px; height: 12px; }
.i16 { width: 16px; height: 16px; }
.i32 { width: 32px; height: 32px; }

.caret {
  flex: none;
  width: 0;
  height: 0;
  border: solid transparent;
  border-width: 4px 4px 0;
  border-top-color: #8a8a8a;
}
.caret.dark { border-width: 5px 4px 0; border-top-color: #333; }
.mono { font-family: "Liberation Mono", monospace; font-size: 10px; }

.frame {
  position: relative;
  display: flex;
  min-height: 100vh;
  padding: 3px;
  border: 1px solid #57555a;
  background: #979597;
  overflow: hidden;
}
.window {
  position: relative;
  display: flex;
  flex-direction: column;
  flex: 1;
  min-width: 0;
  background: #fcfcfe;
}

/* Title bar */
.titlebar {
  display: grid;
  grid-template-columns: 1fr auto 1fr;
  align-items: center;
  height: 30px;
}
.title-left { display: flex; gap: 4px; padding-left: 12px; align-items: center; }
.vline { width: 1px; height: 24px; background: #ccc; }
h1 {
  margin: 0;
  color: #2a2a2a;
  font: bold 15px/20px "Liberation Sans", "Noto Sans CJK SC", sans-serif;
}
h1 span { font-size: 13px; }
.win-controls { display: flex; gap: 15px; justify-content: flex-end; padding-right: 10px; }

/* Ribbon tabs */
.tabs {
  display: flex;
  align-items: flex-end;
  height: 32px;
  padding: 0 4px;
  position: relative;
  z-index: 1;
}
.tab {
  min-width: 53px;
  height: 20px;
  border: 1px solid #c4c5c8;
  border-width: 1px 0 1px 1px;
  background: #eeeff1;
  color: #6e6e73;
  font: bold 15px/16px "Noto Sans CJK SC", sans-serif;
  padding-bottom: 2px;
}
.tab + .tab { padding: 0 11px 2px; border-left-color: #dcdde0; }
.tab:last-child { border-right-width: 1px; border-right-color: #c4c5c8; }
.tab.file { display: flex; align-items: center; justify-content: center; gap: 2px; width: 55px; border-right-width: 1px; font-size: 14px; font-weight: 500; }
.tab.active {
  height: 24px;
  padding: 0 10px 2px 11px;
  border-color: #c4c5c8;
  border-right-width: 1px;
  border-bottom-color: #fcfcfe;
  background: #fcfcfe;
  color: #333;
}
.tabset { display: flex; align-items: flex-end; margin-left: 8px; }
.help-tools { display: flex; gap: 8px; align-items: center; margin-left: auto; padding: 0 4px 9px 0; }
.learn { display: flex; align-items: center; gap: 6px; }

/* Ribbon */
.ribbon {
  display: flex;
  height: 101px;
  margin: -1px 4px 0;
  border: 1px solid #c4c5c8;
}
.group { display: flex; flex-direction: column; border-right: 1px solid #d4d5d8; }
.group-body { display: flex; flex: 1; padding-top: 3px; }
.group-label {
  display: flex;
  align-items: center;
  justify-content: center;
  gap: 4px;
  width: 100%;
  height: 22px;
  border-top: 1px solid #d0d1d4;
  background: #eeeff1;
}
.group-rest { display: flex; flex: 1; align-items: flex-end; }
.g-manage { width: 95px; }
.g-custom { width: 207px; }
.g-report { width: 97px; }
.g-measure { width: 47px; }
.g-inspect { width: 186px; }
.g-study { width: 226px; }
.col { display: flex; flex-direction: column; gap: 1px; padding-left: 7px; }
.col-a { width: 100px; }
.col-b { width: 90px; }
.cmd { display: flex; align-items: center; gap: 3px; height: 24px; white-space: nowrap; }
.cmd .caret { margin-left: 4px; }
.cmd:disabled { color: #a6a6a8; }
.big {
  display: flex;
  flex-direction: column;
  align-items: center;
  width: 46px;
  padding-top: 4px;
  line-height: 12px;
}
.big span { margin-top: 10px; white-space: nowrap; }
.big .caret { margin-top: 3px; }
.big .second { margin-top: 0; }
.g-study .big { width: 57px; }
.g-study .col { width: 108px; padding-left: 5px; }
.tol-text { font: bold 13px "Liberation Sans", sans-serif; fill: #333; }

/* Quick access toolbar */
.quick { display: flex; align-items: center; gap: 8px; height: 24px; padding-left: 12px; }
.quick button { display: flex; align-items: center; gap: 6px; height: 20px; }
.quick .faint .caret { border-top-color: #b4b4b4; }
.quick .last { padding-right: 5px; border-right: 1px solid #ccc; }

/* Model tree panel */
.main { display: flex; flex: 1; padding-right: 4px; }
.side { display: flex; flex-direction: column; flex: none; width: 224px; padding: 13px 1px 11px 4px; }
.side-tabs { display: flex; position: relative; z-index: 1; }
.side-tab {
  display: flex;
  align-items: center;
  justify-content: center;
  width: 30px;
  height: 30px;
  border: 1px solid #c6c7ca;
  border-left-width: 0;
  background: #eeeff1;
}
.side-tab.on { border-left-width: 1px; border-bottom-color: #fcfcfe; background: #fcfcfe; }
.panel {
  flex: 1;
  margin-top: -1px;
  border: 1px solid #c0c1c6;
  border-right: 3px solid #c3c5cb;
  border-bottom-width: 2px;
}
.panel-head { display: flex; align-items: center; gap: 11px; height: 28px; padding: 0 3px 0 20px; }
.panel-head h2 { margin: 0 auto 0 0; font: bold 13px/18px "Noto Sans CJK SC", sans-serif; color: #444; }
.panel-head button { display: flex; align-items: center; gap: 8px; }
.panel-search {
  display: flex;
  align-items: center;
  gap: 9px;
  height: 29px;
  padding: 0 0 7px 4px;
  border-bottom: 1px solid #c6c7ca;
}
.search-box { display: flex; align-items: center; width: 116px; height: 21px; margin-right: -3px; border: 1px solid #bbb; background: #fff; }
.search-box input { flex: 1; min-width: 0; padding: 0 4px; border: 0; background: none; outline: 0; font: inherit; }
.search-box button { margin-right: 5px; }
.panel-search > button { display: flex; }
.grey { color: #8a8a8a; }

.tree {
  margin: 0;
  padding: 6px 0 5px;
  list-style: none;
  color: #4a4a4e;
  font: 12px/24px "Open Sans", "Noto Sans CJK SC", sans-serif;
}
.tree li { display: flex; align-items: center; gap: 3px; height: 24px; padding-left: 30px; }
.tree .root { padding-left: 10px; }
.tree .child { padding-left: 50px; }
.tree .off { color: #b9b9bb; }
.tree .shut, .tree .open { padding-left: 15px; }
.tree .shut::before {
  content: "";
  margin-right: 4px;
  border: solid transparent;
  border-width: 4px 0 4px 8px;
  border-left-color: #808080;
}
.tree .open::before {
  content: "";
  margin-right: 4px;
  border: solid transparent;
  border-width: 7px 4px 0;
  border-top-color: #808080;
}

/* Graphics area */
.viewport {
  position: relative;
  display: flex;
  flex: 1;
  align-items: flex-start;
  justify-content: center;
  min-width: 0;
  padding-top: 7px;
  background: linear-gradient(#005f9f, #003f72 42%, #00254f 70%, #000f30);
}
.model { position: absolute; inset: 0; width: 100%; height: 100%; }
.view-tools {
  position: relative;
  display: flex;
  height: 28px;
  padding: 0 6px;
  border: 1px solid #dfe3ea;
  background: #e9ebf0;
}
.view-tools button {
  position: relative;
  display: flex;
  align-items: center;
  justify-content: center;
  width: 27px;
  border-left: 1px solid #cfd2d8;
  background: #fcfcfe;
}
.view-tools .more::after {
  content: "";
  position: absolute;
  right: 2px;
  bottom: 3px;
  border: solid transparent;
  border-width: 0 0 4px 4px;
  border-bottom-color: #444;
}

/* Status bar */
.status {
  display: flex;
  align-items: center;
  height: 38px;
  padding-left: 6px;
  border-top: 2px solid #979597;
  background: #eeeff1;
}
.nav-btn {
  display: flex;
  align-items: center;
  justify-content: center;
  width: 22px;
  height: 22px;
  margin: 6px 4px 0 0;
  border: 1px solid #c2c3c6;
  background: #f6f6f8;
}
.pressed { border-color: #8c8c90; background: #e2e3e5; }
.message {
  display: flex;
  align-items: center;
  flex: 1;
  gap: 5px;
  height: 24px;
  margin: 0 0 0 5px;
  padding: 0 0 4px 7px;
  border-left: 1px solid #ccc;
  color: #4a4a4e;
  font: 12px/18px "Open Sans", "Noto Sans CJK SC", sans-serif;
}
.dot { width: 5px; height: 5px; border-radius: 50%; background: #26607c; }
.cell { display: flex; align-items: center; height: 30px; border-left: 1px solid #ccc; }
.blank { width: 30px; }
.lights { gap: 2px; width: 36px; padding-left: 5px; }
.lights i { width: 6px; height: 6px; border-radius: 50%; background: #cfd0d2; }
.lights .go { width: 11px; height: 11px; background: #44c944; }
.flag { width: 41px; padding-left: 6px; }
.find { width: 47px; padding-left: 3px; }
.find button {
  display: flex;
  align-items: center;
  justify-content: center;
  width: 40px;
  height: 28px;
  border: 1px solid #b4b5b8;
  border-radius: 2px;
  background: linear-gradient(#fff, #e4e5e7);
}
.pick { position: relative; width: 293px; padding-left: 96px; }
.pick select {
  appearance: none;
  width: 178px;
  height: 19px;
  padding: 0 8px;
  border: 1px solid #b4b4b4;
  border-radius: 0;
  background: #f4f4f6;
  color: #222;
  font: inherit;
}
.pick .caret { margin-left: -12px; border-top-color: #555; }

/* Forum mark laid over the lower right corner */
.watermark {
  position: absolute;
  right: 0;
  bottom: 0;
  display: flex;
  gap: 10px;
  width: 207px;
  height: 63px;
  background: rgba(255, 255, 255, .36);
  pointer-events: none;
}
.mark { width: 60px; height: 58px; margin: 3px -2px 0 1px; }
.mark-text { display: flex; flex-direction: column; white-space: nowrap; }
.mark-text strong {
  color: rgba(14, 125, 92, .85);
  font: 900 29px/38px "Noto Sans CJK SC", sans-serif;
}
.mark-text span { margin-left: -11px; color: #bcd3e0; font: 15px/22px "Open Sans", sans-serif; }

.orb {
  position: absolute;
  left: 14px;
  bottom: -22px;
  width: 26px;
  height: 26px;
  border: 1px solid #2c5870;
  border-radius: 50%;
  background: #a9c7d6;
}
```
